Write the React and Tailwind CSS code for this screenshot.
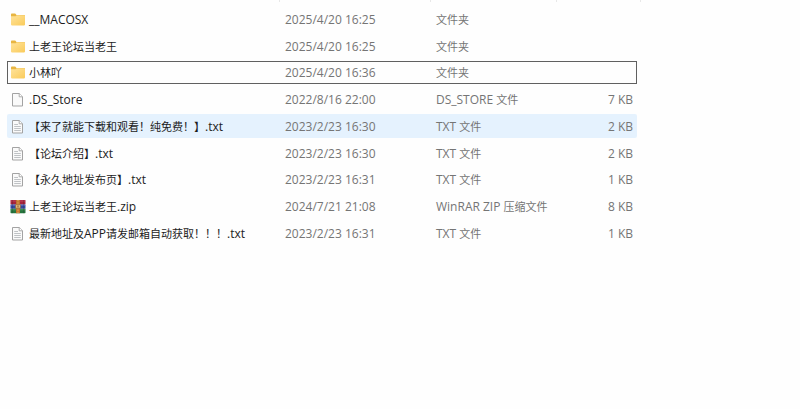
import { clsx } from 'clsx'

const files = [
  { name: '__MACOSX', date: '2025/4/20 16:25', type: '文件夹', size: '', icon: 'folder' },
  { name: '上老王论坛当老王', date: '2025/4/20 16:25', type: '文件夹', size: '', icon: 'folder' },
  { name: '小林吖', date: '2025/4/20 16:36', type: '文件夹', size: '', icon: 'folder', focused: true },
  { name: '.DS_Store', date: '2022/8/16 22:00', type: 'DS_STORE 文件', size: '7 KB', icon: 'blank' },
  { name: '【来了就能下载和观看！纯免费！】.txt', date: '2023/2/23 16:30', type: 'TXT 文件', size: '2 KB', icon: 'text', hovered: true },
  { name: '【论坛介绍】.txt', date: '2023/2/23 16:30', type: 'TXT 文件', size: '2 KB', icon: 'text' },
  { name: '【永久地址发布页】.txt', date: '2023/2/23 16:31', type: 'TXT 文件', size: '1 KB', icon: 'text' },
  { name: '上老王论坛当老王.zip', date: '2024/7/21 21:08', type: 'WinRAR ZIP 压缩文件', size: '8 KB', icon: 'zip' },
  { name: '最新地址及APP请发邮箱自动获取！！！.txt', date: '2023/2/23 16:31', type: 'TXT 文件', size: '1 KB', icon: 'text' },
]

function FolderIcon() {
  return (
    <svg viewBox="0 0 16 16" className="h-4 w-4 shrink-0" aria-hidden="true">
      <defs>
        <linearGradient id="folder" x1="0" y1="0" x2="1" y2="1">
          <stop offset="0" stopColor="#ffe39b" />
          <stop offset="1" stopColor="#facb5a" />
        </linearGradient>
      </defs>
      <path d="M1 2.4a.8.8 0 0 1 .8-.8h3.4l1.3 1.3H14.2a.8.8 0 0 1 .8.8V8H1z" fill="#e8b541" />
      <path d="M1 4.2h4.6l1.1-.9h7.6a.7.7 0 0 1 .7.7v8.6a.8.8 0 0 1-.8.8H1.8a.8.8 0 0 1-.8-.8z" fill="url(#folder)" />
    </svg>
  )
}

function PageIcon({ lines }) {
  return (
    <svg viewBox="0 0 16 16" className="h-4 w-4 shrink-0" aria-hidden="true">
      <path d="M2.5 1.5h6.8l3.2 3.2v9.3h-10z" fill="#fafafa" stroke="#a3a3a3" strokeWidth="1" />
      <path d="M9.2 1.5v3.3h3.3" fill="#fff" stroke="#a3a3a3" strokeWidth="0.9" />
      {lines && (
        <path d="M4.2 5.5h3.8M4.2 7.5h6.6M4.2 9.5h6.6M4.2 11.5h6.6" stroke="#b0b4b8" strokeWidth="0.8" />
      )}
    </svg>
  )
}

function ArchiveIcon() {
  return (
    <svg viewBox="0 0 16 16" className="h-4 w-4 shrink-0" aria-hidden="true">
      <rect x="0.5" y="1" width="15" height="4.4" rx="0.6" fill="#a8243c" />
      <rect x="0.5" y="5.4" width="15" height="4.4" rx="0.4" fill="#34489f" />
      <rect x="0.5" y="9.8" width="15" height="4.4" rx="0.6" fill="#25753c" />
      <path d="M1 2h14" stroke="#cc5566" strokeWidth="0.7" />
      <path d="M1 6.4h14" stroke="#6478c8" strokeWidth="0.7" />
      <path d="M1 10.8h14" stroke="#5aa869" strokeWidth="0.7" />
      <path d="M2.5 1v13.2M13.5 1v13.2" stroke="#2c2030" strokeOpacity="0.3" strokeWidth="0.8" />
      <rect x="6" y="1" width="4" height="13.2" fill="#c0722c" />
      <path d="M8 1v13.2" stroke="#e6b56a" strokeWidth="1" strokeDasharray="1 0.7" />
      <rect x="5.6" y="5.6" width="4.8" height="3.6" rx="0.5" fill="#e3bd7c" stroke="#94602c" strokeWidth="0.6" />
      <path d="M8 6.4v2" stroke="#7c4a20" strokeWidth="0.9" />
    </svg>
  )
}

function FileIcon({ kind }) {
  if (kind === 'folder') return <FolderIcon />
  if (kind === 'zip') return <ArchiveIcon />
  return <PageIcon lines={kind === 'text'} />
}

// Han characters are set one size below the Latin ones
function MixedText({ text }) {
  const runs = text.match(/[\u3000-\uffef]+|[^\u3000-\uffef]+/g) || []
  return (
    <span>
      {runs.map((run, i) => (
        <span key={i} className={/[\u3000-\uffef]/.test(run) ? 'text-[11px]' : 'text-xs'}>{run}</span>
      ))}
    </span>
  )
}

export default function App() {
  return (
    <main
      lang="zh-CN"
      className="min-h-screen bg-[#fefefe] px-[7px] font-['Open_Sans','Noto_Sans_CJK_SC',sans-serif] text-xs text-[#757575]"
    >
      <div className="flex h-1" aria-hidden="true">
        <span className="h-0.5 w-[273px] border-r border-[#e8e8e8]" />
        <span className="h-0.5 w-[151px] border-r border-[#e8e8e8]" />
        <span className="h-0.5 w-[126px] border-r border-[#e8e8e8]" />
        <span className="h-0.5 w-[84px] border-r border-[#e8e8e8]" />
      </div>
      <table className="h-[244px] w-[630px] max-w-full table-fixed border-separate border-spacing-x-0 border-spacing-y-[3px]">
        <colgroup>
          <col className="w-[272px]" />
          <col className="w-[151px]" />
          <col className="w-[126px]" />
          <col />
        </colgroup>
        <tbody>
          {files.map((file) => (
            <tr
              key={file.name}
              className={clsx(
                'whitespace-nowrap leading-5',
                file.focused && 'outline outline-1 -outline-offset-1 outline-[#606060]',
                file.hovered && '*:bg-[#e5f2fe] *:first:rounded-l-xs *:last:rounded-r-xs'
              )}
            >
              <td className="p-0 pt-0.5 pl-[3px]">
                <div className="flex items-center gap-[3px] text-[#1c1c1c]">
                  <FileIcon kind={file.icon} />
                  <MixedText text={file.name} />
                </div>
              </td>
              <td className="p-0 pt-0.5 pl-1.5">{file.date}</td>
              <td className="p-0 pt-0.5 pl-1.5">
                <MixedText text={file.type} />
              </td>
              <td className="p-0 pt-0.5 pr-1 text-right">{file.size}</td>
            </tr>
          ))}
        </tbody>
      </table>
    </main>
  )
}
